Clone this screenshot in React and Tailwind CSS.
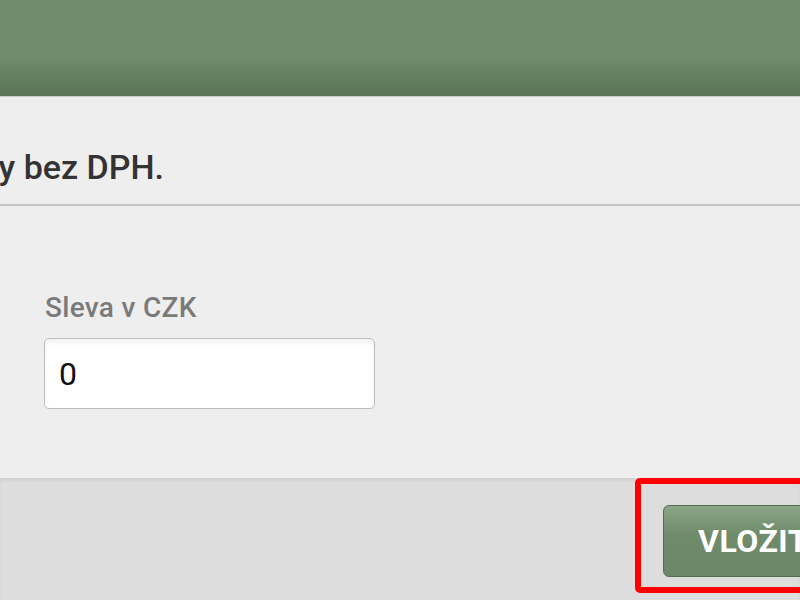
import React from "react";

export default function App() {
  return (
    <div
      className="relative w-[800px] h-[600px] overflow-hidden flex flex-col bg-[#eeeeee]"
      style={{ fontFamily: "Roboto, 'Liberation Sans', sans-serif" }}
    >
      {/* Header */}
      <div className="h-[97px] shrink-0 bg-linear-to-b from-[#6f8c6b] from-60% to-[#5a7356] border-b border-[#c9cec8]" />

      {/* Body */}
      <div className="h-[381px] shrink-0 flex flex-col bg-[#eeeeee]">
        <div className="h-[107px] shrink-0 flex items-end pb-[17px]">
          <div className="w-[164px] flex justify-end">
            <span className="whitespace-nowrap text-[34px] leading-[40px] font-medium text-[#333333]">
              Ceny jsou uvedeny bez DPH.
            </span>
          </div>
        </div>
        <div className="h-[2px] shrink-0 bg-[#c3c3c3]" />
        <div className="pt-[86px] pl-[44px] flex flex-col">
          <label className="text-[28px] leading-[32px] font-medium text-[#7a7a7a] pl-[1px] tracking-[0.3px]">
            Sleva v CZK
          </label>
          <input
            type="text"
            defaultValue="0"
            readOnly
            className="mt-[14px] w-[331px] h-[71px] rounded-[5px] border border-[#bcbcbc] bg-white pl-[14px] text-[32px] text-[#111111] outline-none shadow-[inset_0_4px_5px_rgba(0,0,0,0.05)]"
            style={{ fontFamily: "Roboto, 'Liberation Sans', sans-serif" }}
          />
        </div>
      </div>

      {/* Footer */}
      <div className="relative h-[122px] shrink-0 bg-[#dddddd] shadow-[inset_0_3px_3px_rgba(0,0,0,0.05)] flex items-center justify-end">
        <button className="w-[170px] h-[72px] -mr-[33px] mt-[4px] shrink-0 rounded-[6px] border border-[#566d52] bg-linear-to-b from-[#8ca786] via-[#6f8b6b] via-40% to-[#6b8767] text-left pl-[34px] text-[32px] font-bold text-white tracking-[0.5px]">
          VLOŽIT
        </button>
        <div className="absolute left-[635px] top-0 w-[200px] h-[115px] border-[6px] border-[#ff0000] rounded-[5px]" />
      </div>
    </div>
  );
}
